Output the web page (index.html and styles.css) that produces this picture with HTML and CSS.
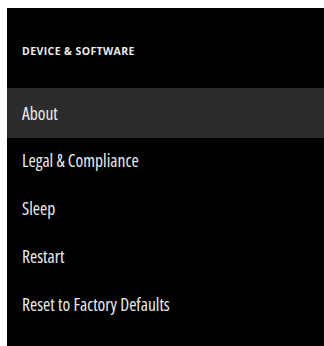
FILE: index.html
```html
<!doctype html>
<html>
<head>
<meta charset="utf-8">
<meta name="viewport" content="width=device-width,initial-scale=1">
<title>Device &amp; Software</title>
<link rel="stylesheet" href="styles.css">
</head>
<body>
<div id="settings-panel">
  <div class="section-title">DEVICE &amp; SOFTWARE</div>
  <ul class="menu">
    <li class="selected">About</li>
    <li>Legal &amp; Compliance</li>
    <li>Sleep</li>
    <li>Restart</li>
    <li>Reset to Factory Defaults</li>
  </ul>
</div>
</body>
</html>
```

FILE: styles.css
```css
html, body {
     height: 100%;
}
body {
     margin: 0;
     padding: 8px 0 0 7px;
     box-sizing: border-box;
     background: #fff;
     font-family: "Open Sans", "DejaVu Sans", sans-serif;
}
 #settings-panel {
     height: 100%;
     background: #000;
     color: #ececec;
}
 .section-title {
     height: 80px;
     box-sizing: border-box;
     padding: 5px 0 0 15px;
     display: flex;
     align-items: center;
     font-size: 10.5px;
     font-weight: bold;
     letter-spacing: 0.4px;
}
 ul.menu {
     list-style: none;
     padding: 0;
     margin: 0;
}
 ul.menu li {
     height: 48px;
     display: flex;
     align-items: center;
     padding-left: 15px;
     font-size: 17.5px;
     font-stretch: condensed;
}
 ul.menu li.selected {
     background: #2c2c2c;
     height: 50px;
     margin-bottom: -2px;
}
```
